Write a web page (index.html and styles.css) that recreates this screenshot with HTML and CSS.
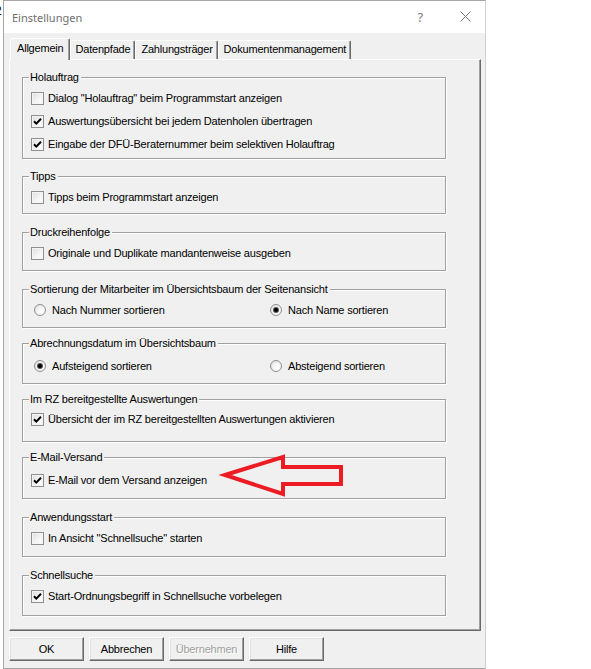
FILE: index.html
```html
<!DOCTYPE html>
<html>
<head>
<meta charset="utf-8">
<title>Einstellungen</title>
<link rel="stylesheet" href="styles.css">
</head>
<body>
<span class="stray">2</span>
<div class="window">
  <div class="titlebar">
    <span class="title">Einstellungen</span>
    <span class="help">?</span>
    <span class="close"><svg width="11" height="11" viewBox="0 0 11 11"><path d="M0.5 0.5 L10.5 10.5 M10.5 0.5 L0.5 10.5" stroke="#7a7a7a" stroke-width="1" fill="none"/></svg></span>
  </div>
  <div class="client">
    <div class="tabs">
      <div class="tab active">Allgemein</div>
      <div class="tab">Datenpfade</div>
      <div class="tab">Zahlungsträger</div>
      <div class="tab">Dokumentenmanagement</div>
    </div>
    <div class="panel">
      <div class="group g-hol">
        <div class="legend">Holauftrag</div>
        <div class="row"><span class="cb"></span>Dialog "Holauftrag" beim Programmstart anzeigen</div>
        <div class="row"><span class="cb checked"><svg viewBox="0 0 11 11"><path d="M2 5.2 L4.3 7.6 L9 2.8" stroke="#000" stroke-width="2" fill="none"/></svg></span>Auswertungsübersicht bei jedem Datenholen übertragen</div>
        <div class="row"><span class="cb checked"><svg viewBox="0 0 11 11"><path d="M2 5.2 L4.3 7.6 L9 2.8" stroke="#000" stroke-width="2" fill="none"/></svg></span>Eingabe der DFÜ-Beraternummer beim selektiven Holauftrag</div>
      </div>
      <div class="group g-tipps">
        <div class="legend">Tipps</div>
        <div class="row"><span class="cb"></span>Tipps beim Programmstart anzeigen</div>
      </div>
      <div class="group g-druck">
        <div class="legend">Druckreihenfolge</div>
        <div class="row"><span class="cb"></span>Originale und Duplikate mandantenweise ausgeben</div>
      </div>
      <div class="group g-sort">
        <div class="legend">Sortierung der Mitarbeiter im Übersichtsbaum der Seitenansicht</div>
        <div class="row radios">
          <div class="ropt"><span class="rb"></span>Nach Nummer sortieren</div>
          <div class="ropt"><span class="rb on"></span>Nach Name sortieren</div>
        </div>
      </div>
      <div class="group g-abr">
        <div class="legend">Abrechnungsdatum im Übersichtsbaum</div>
        <div class="row radios">
          <div class="ropt"><span class="rb on"></span>Aufsteigend sortieren</div>
          <div class="ropt"><span class="rb"></span>Absteigend sortieren</div>
        </div>
      </div>
      <div class="group g-rz">
        <div class="legend">Im RZ bereitgestellte Auswertungen</div>
        <div class="row"><span class="cb checked"><svg viewBox="0 0 11 11"><path d="M2 5.2 L4.3 7.6 L9 2.8" stroke="#000" stroke-width="2" fill="none"/></svg></span>Übersicht der im RZ bereitgestellten Auswertungen aktivieren</div>
      </div>
      <div class="group g-mail">
        <div class="legend">E-Mail-Versand</div>
        <div class="row"><span class="cb checked"><svg viewBox="0 0 11 11"><path d="M2 5.2 L4.3 7.6 L9 2.8" stroke="#000" stroke-width="2" fill="none"/></svg></span>E-Mail vor dem Versand anzeigen</div>
      </div>
      <div class="group g-anw">
        <div class="legend">Anwendungsstart</div>
        <div class="row"><span class="cb"></span>In Ansicht "Schnellsuche" starten</div>
      </div>
      <div class="group g-schnell">
        <div class="legend">Schnellsuche</div>
        <div class="row"><span class="cb checked"><svg viewBox="0 0 11 11"><path d="M2 5.2 L4.3 7.6 L9 2.8" stroke="#000" stroke-width="2" fill="none"/></svg></span>Start-Ordnungsbegriff in Schnellsuche vorbelegen</div>
      </div>
    </div>
    <div class="buttons">
      <div class="btn">OK</div>
      <div class="btn">Abbrechen</div>
      <div class="btn disabled">Übernehmen</div>
      <div class="btn">Hilfe</div>
    </div>
  </div>
</div>
<svg class="arrow" width="130" height="46" viewBox="0 0 130 46">
  <polygon points="7,23 65,5 65,15 123,15 123,32 65,32 65,42" fill="none" stroke="#ed1c24" stroke-width="4" stroke-linejoin="miter"/>
</svg>
</body>
</html>
```
FILE: styles.css
```css
html, body {
  margin: 0;
  padding: 0;
  background: #fff;
}
body {
  font-family: "Liberation Sans", Arial, sans-serif;
  font-size: 11px;
  letter-spacing: -0.2px;
  color: #000;
  position: relative;
  width: 591px;
  height: 669px;
  overflow: hidden;
}
.stray {
  position: absolute;
  left: -5px;
  top: 5px;
  font-family: "Liberation Sans", sans-serif;
  font-size: 12px;
  line-height: 12px;
  letter-spacing: 0;
}
.window {
  position: relative;
  margin-left: 3px;
  width: 481px;
  height: 667px;
  border: 1px solid #a6a6a6;
  border-right-color: #d0d0d0;
  background: #f0f0f0;
  display: flex;
  flex-direction: column;
}
.titlebar {
  height: 32px;
  flex: none;
  background: #fff;
  display: flex;
  align-items: center;
}
.title {
  font-family: "Noto Sans", sans-serif;
  font-size: 11px;
  letter-spacing: 0;
  color: #6e6e6e;
  margin-left: 8px;
  flex: 1;
}
.help {
  font-family: "Noto Sans", sans-serif;
  font-size: 13px;
  color: #7a7a7a;
  margin-right: 37px;
  margin-top: -1px;
}
.close {
  display: flex;
  margin-right: 14px;
  margin-top: -1px;
}
.client {
  flex: 1;
  padding: 5px 3px 0 5px;
}
.tabs {
  display: flex;
  align-items: flex-end;
  height: 21px;
  padding-left: 1px;
  position: relative;
  z-index: 1;
}
.tab {
  height: 18px;
  line-height: 17px;
  padding: 0 4px 0 5px;
  border: 1px solid #fff;
  border-bottom: none;
  border-right-color: #696969;
  box-shadow: inset -1px 0 0 #a0a0a0;
  border-radius: 2px 2px 0 0;
  background: #f0f0f0;
}
.tab.active {
  height: 21px;
  margin-bottom: -1px;
  padding: 0 5px 0 6px;
  line-height: 19px;
}
.panel {
  width: 472px;
  height: 572px;
  box-sizing: border-box;
  border: 1px solid #fff;
  border-right-color: #696969;
  border-bottom-color: #696969;
  box-shadow: inset -1px -1px 0 #a0a0a0;
  padding-top: 17px;
}
.group {
  margin: 18px 0 0 12px;
  width: 424px;
  height: 39px;
  box-sizing: border-box;
  border: 1px solid #a0a0a0;
  box-shadow: 1px 1px 0 #fff, inset 1px 1px 0 #fff;
}
.g-hol { margin-top: 0; height: 82px; }
.g-tipps { margin-top: 17px; height: 38px; }
.g-druck { margin-top: 18px; height: 39px; }
.g-sort { margin-top: 18px; height: 39px; }
.g-abr { margin-top: 15px; height: 41px; }
.g-rz { margin-top: 15px; height: 43px; }
.g-mail { margin-top: 15px; height: 42px; }
.g-anw { margin-top: 18px; height: 40px; }
.g-schnell { margin-top: 18px; height: 41px; }
.g-abr .row, .g-mail .row { margin-top: 8px; }
.g-rz .row { margin-top: 5px; }
.legend {
  display: table;
  margin: -7px 0 0 6px;
  padding: 0 2px 0 1px;
  height: 13px;
  line-height: 13px;
  background: #f0f0f0;
}
.row {
  display: flex;
  align-items: center;
  height: 16px;
  margin-top: 6px;
  padding-left: 8px;
}
.row + .row {
  margin-top: 7px;
}
.cb {
  width: 13px;
  height: 13px;
  box-sizing: border-box;
  border: 1px solid #8e8f8f;
  background: linear-gradient(135deg, #dcdcdc 0%, #f6f6f6 60%, #fff 100%);
  box-shadow: inset 0 0 0 1px #f4f4f4;
  margin-right: 4px;
  flex: none;
  display: flex;
}
.cb svg {
  width: 11px;
  height: 11px;
}
.radios {
  display: grid;
  grid-template-columns: 236px 1fr;
  padding-left: 11px;
}
.ropt {
  display: flex;
  align-items: center;
}
.rb {
  width: 12px;
  height: 12px;
  box-sizing: border-box;
  border-radius: 50%;
  border: 1px solid #8e8f8f;
  background: radial-gradient(circle at 65% 65%, #fff 0%, #f4f4f4 45%, #d8d8d8 100%);
  margin-right: 6px;
  flex: none;
  display: flex;
  align-items: center;
  justify-content: center;
}
.rb.on::after {
  content: "";
  width: 4px;
  height: 4px;
  border-radius: 50%;
  background: #000;
  box-shadow: 0 0 0 1px #555;
}
.buttons {
  display: flex;
  gap: 5px;
  margin-top: 6px;
}
.btn {
  width: 75px;
  height: 24px;
  box-sizing: border-box;
  border: 1px solid #fff;
  border-right-color: #696969;
  border-bottom-color: #696969;
  box-shadow: inset -1px -1px 0 #a0a0a0, inset 1px 1px 0 #e3e3e3;
  display: flex;
  align-items: center;
  justify-content: center;
}
.btn.disabled {
  color: #a0a0a0;
  text-shadow: 1px 1px 0 #fff;
}
.arrow {
  position: absolute;
  left: 218px;
  top: 452px;
}
```
